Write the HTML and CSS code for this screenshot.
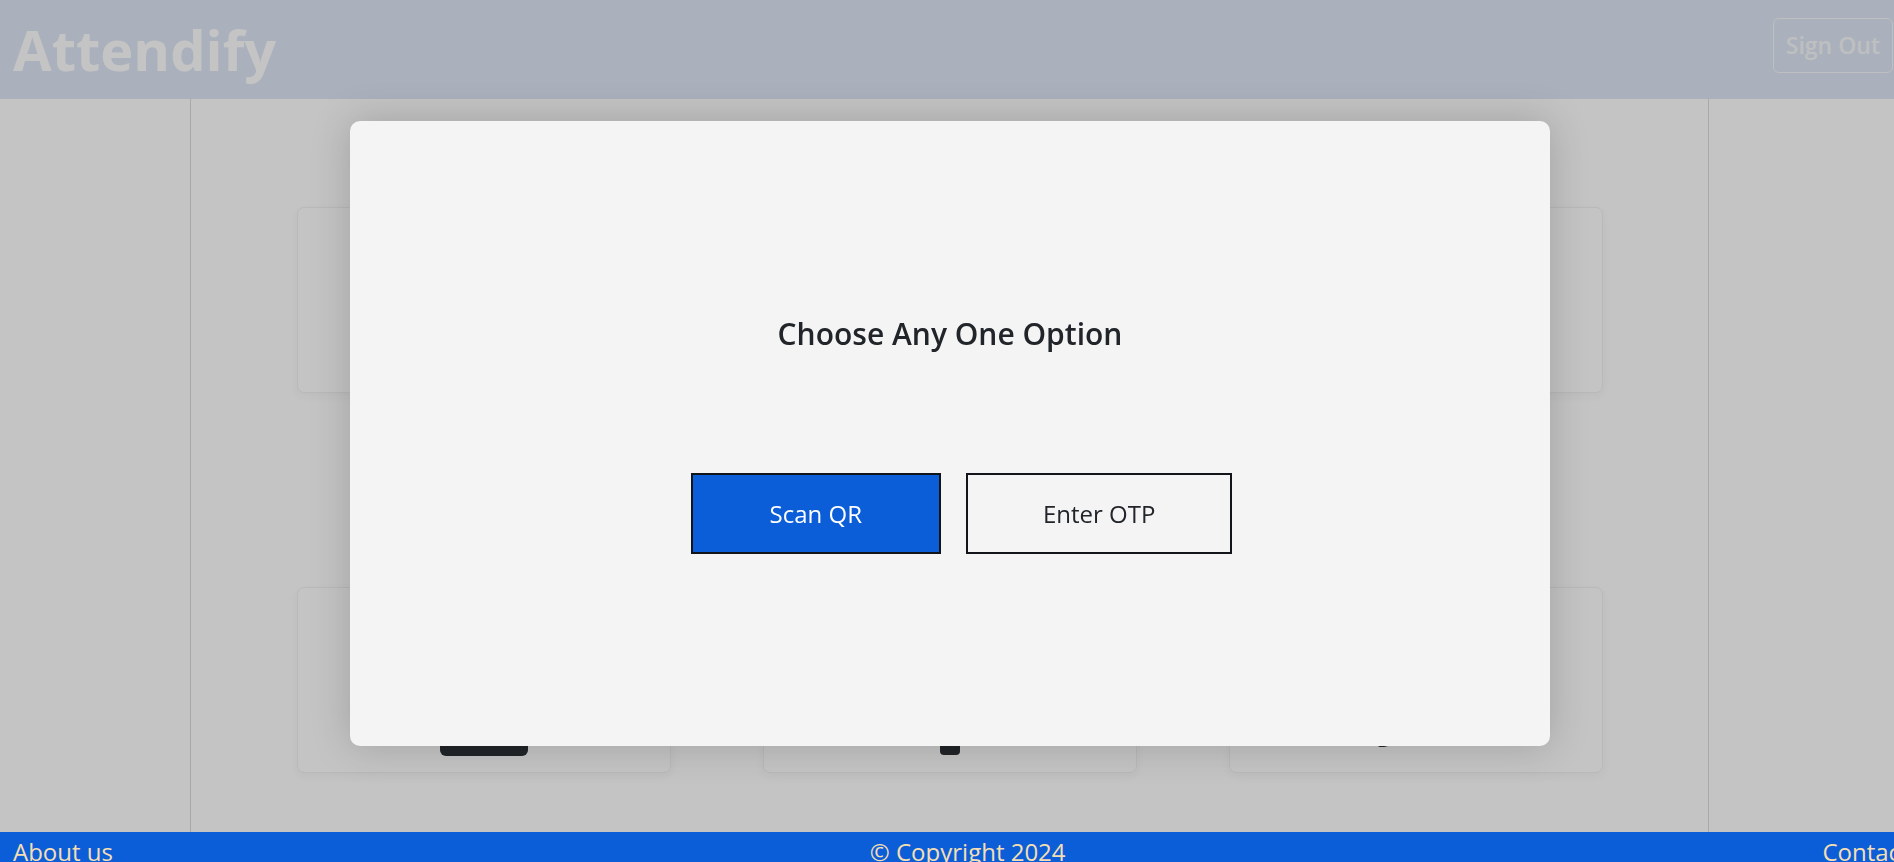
FILE: index.html
```html
<!DOCTYPE html>
<html lang="en">
<head>
<meta charset="utf-8">
<title>Attendify</title>
<link rel="stylesheet" href="styles.css">
</head>
<body>
  <div class="page">
    <header class="topbar">
      <h1 class="brand">Attendify</h1>
      <button class="signout" type="button">Sign Out</button>
    </header>
    <main class="content">
      <div class="container">
        <div class="card-grid">
          <div class="card"></div>
          <div class="card"></div>
          <div class="card"></div>
          <div class="card"><span class="card-btn"></span></div>
          <div class="card"><span class="card-bar"></span></div>
          <div class="card"><span class="card-tail"></span></div>
        </div>
      </div>
    </main>
    <footer class="footer">
      <a class="footer-link" href="#">About us</a>
      <span class="footer-copy">© Copyright 2024</span>
      <a class="footer-link" href="#">Contact us</a>
    </footer>
  </div>

  <div class="backdrop"></div>

  <div class="modal-wrap">
    <div class="modal">
      <h2 class="modal-title">Choose Any One Option</h2>
      <div class="modal-actions">
        <button class="opt opt-primary" type="button">Scan QR</button>
        <button class="opt opt-outline" type="button">Enter OTP</button>
      </div>
    </div>
  </div>
</body>
</html>
```

FILE: styles.css
```css
* { box-sizing: border-box; }

html, body {
  margin: 0;
  padding: 0;
  height: 100%;
  overflow: hidden;
}

body {
  font-family: "Open Sans", "Noto Sans", "DejaVu Sans", sans-serif;
  color: #212529;
  background: #ffffff;
  line-height: 1.5;
}

.page {
  display: flex;
  flex-direction: column;
}

/* Header */
.topbar {
  height: 99px;
  background: #dee7f6;
  display: flex;
  align-items: center;
  justify-content: space-between;
  padding: 0 1px 0 13px;
}

.brand {
  margin: 0;
  font-size: 56px;
  font-weight: 700;
  line-height: 1.2;
  color: #ffffff;
}

.signout {
  font-family: inherit;
  font-size: 23px;
  font-weight: 600;
  line-height: 35px;
  padding: 9px 12px;
  color: #f8f9fa;
  background: transparent;
  border: 1px solid #f8f9fa;
  border-radius: 6px;
  margin-bottom: 8px;
}

/* Main */
.content {
  display: flex;
}

.container {
  margin-left: 190px;
  width: 1519px;
  border-left: 1px solid #dcdcdc;
  border-right: 1px solid #dcdcdc;
  padding: 108px 0 59px;
}

.card-grid {
  display: grid;
  grid-template-columns: repeat(3, 374px);
  grid-auto-rows: 186px;
  column-gap: 92px;
  row-gap: 194px;
  justify-content: center;
}

.card {
  background: #ffffff;
  border: 1px solid #f1f1f1;
  border-radius: 7px;
  box-shadow: 0 3px 10px rgba(0, 0, 0, 0.04);
  display: flex;
  flex-direction: column;
  justify-content: flex-end;
  align-items: center;
  padding-bottom: 16px;
}

.card-btn {
  width: 88px;
  height: 38px;
  border-radius: 6px;
  background: #2b3035;
}

.card-bar {
  width: 20px;
  height: 30px;
  border-radius: 0 0 4px 4px;
  background: #2b3035;
  margin-bottom: 1px;
}

.card-tail {
  width: 16px;
  height: 10px;
  border-radius: 0 0 10px 2px;
  background: #2b3035;
  margin-right: 60px;
  margin-bottom: 9px;
}

/* Footer */
.footer {
  position: relative;
  z-index: 20;
  background: #0b5ed7;
  display: flex;
  justify-content: space-between;
  padding: 2px 13px 10px;
  margin-right: -60px;
  font-size: 24px;
  line-height: 1.5;
  color: #f5deb3;
}

.footer-link {
  color: #f5deb3;
  text-decoration: none;
}

/* Modal */
.backdrop {
  position: fixed;
  inset: 0;
  z-index: 10;
  background: rgba(0, 0, 0, 0.231);
}

.modal-wrap {
  position: fixed;
  inset: 0;
  z-index: 30;
  display: flex;
  justify-content: center;
  align-items: flex-start;
  padding: 121px 0 0 6px;
}

.modal {
  width: 1200px;
  height: 625px;
  background: #f4f4f4;
  border-radius: 10px;
  box-shadow: 0 0 40px rgba(0, 0, 0, 0.18);
  display: flex;
  flex-direction: column;
  align-items: center;
  padding-top: 195px;
}

.modal-title {
  margin: 0 0 121px;
  font-size: 30px;
  font-weight: 600;
  line-height: 36px;
  color: #212529;
}

.modal-actions {
  display: flex;
  gap: 25px;
  padding-left: 23px;
}

.opt {
  font-family: inherit;
  font-size: 24px;
  font-weight: 400;
  line-height: 37px;
  padding: 20px 75px;
  border: 2px solid #111418;
  border-radius: 0;
  cursor: pointer;
}

.opt-primary {
  background: #0b5ed7;
  color: #ffffff;
  padding-left: 77px;
  padding-right: 77px;
}

.opt-outline {
  background: transparent;
  color: #212529;
}
```
